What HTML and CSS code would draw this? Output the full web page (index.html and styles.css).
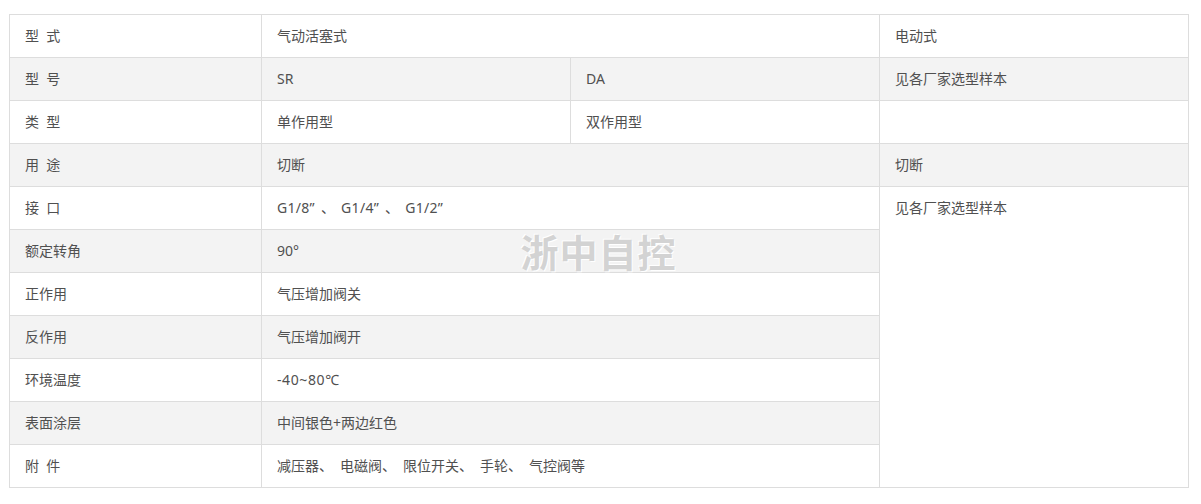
FILE: index.html
```html
<!DOCTYPE html>
<html lang="zh-CN">
<head>
<meta charset="utf-8">
<title>执行机构</title>
<link rel="stylesheet" href="styles.css">
</head>
<body>
<div class="wrap">
  <table class="spec">
    <colgroup>
      <col class="c1"><col class="c2"><col class="c3"><col class="c4">
    </colgroup>
    <tbody>
      <tr><td>型&nbsp;&nbsp;式</td><td colspan="2">气动活塞式</td><td>电动式</td></tr>
      <tr class="alt"><td>型&nbsp;&nbsp;号</td><td>SR</td><td>DA</td><td>见各厂家选型样本</td></tr>
      <tr><td>类&nbsp;&nbsp;型</td><td>单作用型</td><td>双作用型</td><td></td></tr>
      <tr class="alt"><td>用&nbsp;&nbsp;途</td><td colspan="2">切断</td><td>切断</td></tr>
      <tr><td>接&nbsp;&nbsp;口</td><td colspan="2" class="ports">G1/8” 、 G1/4” 、 G1/2”</td><td rowspan="7" class="tall">见各厂家选型样本</td></tr>
      <tr class="alt"><td>额定转角</td><td colspan="2">90°</td></tr>
      <tr><td>正作用</td><td colspan="2">气压增加阀关</td></tr>
      <tr class="alt"><td>反作用</td><td colspan="2">气压增加阀开</td></tr>
      <tr><td>环境温度</td><td colspan="2" class="temp">-40~80℃</td></tr>
      <tr class="alt"><td>表面涂层</td><td colspan="2">中间银色+两边红色</td></tr>
      <tr><td>附&nbsp;&nbsp;件</td><td colspan="2">减压器<span class="dun">、</span>电磁阀<span class="dun">、</span>限位开关<span class="dun">、</span>手轮<span class="dun">、</span>气控阀等</td></tr>
    </tbody>
  </table>
  <div class="mark">浙中自控</div>
</div>
</body>
</html>
```

FILE: styles.css
```css
html, body {
  margin: 0;
  padding: 0;
  background: #ffffff;
}

body {
  font-family: "Noto Sans", "Noto Sans CJK SC", sans-serif;
  font-size: 14px;
  color: #505050;
}

.wrap {
  position: relative;
  width: 1179px;
  margin: 14px 0 0 9px;
}

.spec {
  width: 1179px;
  border-collapse: collapse;
  table-layout: fixed;
}

.c1 { width: 252px; }
.c2 { width: 309px; }
.c3 { width: 309px; }
.c4 { width: 309px; }

.spec td {
  border: 1px solid #dddddd;
  height: 43px;
  padding: 0 15px;
  line-height: 20px;
  vertical-align: middle;
  box-sizing: border-box;
  background: #ffffff;
}

.spec tr.alt td {
  background: #f3f3f3;
}

.spec td.tall {
  vertical-align: top;
  padding-top: 11px;
  background: #ffffff;
}

.ports {
  word-spacing: 2px;
  letter-spacing: 0.3px;
}

.temp {
  letter-spacing: 0.6px;
}

.dun {
  margin-right: 7px;
}

.mark {
  position: absolute;
  left: 50%;
  top: 50%;
  transform: translate(-50%, -50%);
  font-family: "Noto Sans CJK SC", sans-serif;
  font-weight: 700;
  font-size: 38px;
  line-height: 40px;
  color: #d3d3d3;
  letter-spacing: 1px;
  text-shadow: 1px 1px 0 #ffffff, -1px -1px 0 #ffffff;
  white-space: nowrap;
  pointer-events: none;
}
```
